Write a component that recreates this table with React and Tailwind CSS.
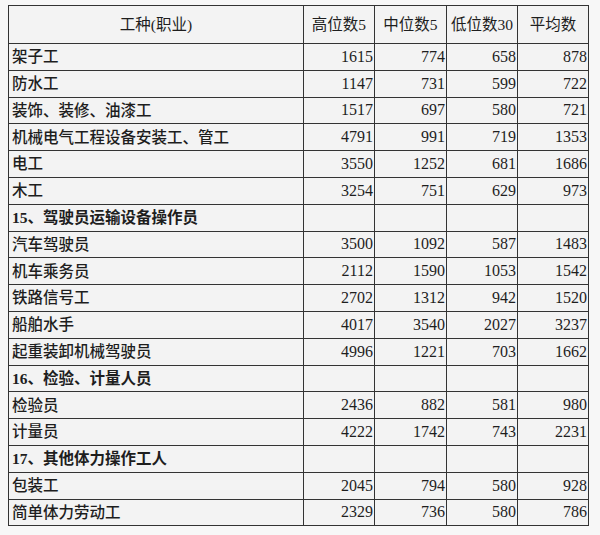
import React from 'react'

const rows = [
  ['架子工', 1615, 774, 658, 878],
  ['防水工', 1147, 731, 599, 722],
  ['装饰、装修、油漆工', 1517, 697, 580, 721],
  ['机械电气工程设备安装工、管工', 4791, 991, 719, 1353],
  ['电工', 3550, 1252, 681, 1686],
  ['木工', 3254, 751, 629, 973],
  ['15、驾驶员运输设备操作员'],
  ['汽车驾驶员', 3500, 1092, 587, 1483],
  ['机车乘务员', 2112, 1590, 1053, 1542],
  ['铁路信号工', 2702, 1312, 942, 1520],
  ['船舶水手', 4017, 3540, 2027, 3237],
  ['起重装卸机械驾驶员', 4996, 1221, 703, 1662],
  ['16、检验、计量人员'],
  ['检验员', 2436, 882, 581, 980],
  ['计量员', 4222, 1742, 743, 2231],
  ['17、其他体力操作工人'],
  ['包装工', 2045, 794, 580, 928],
  ['简单体力劳动工', 2329, 736, 580, 786],
]

const headers = ['高位数5', '中位数5', '低位数30', '平均数']

const App = () => {
  return (
    <div className="h-[535px] w-[600px] overflow-hidden bg-[#f7f7f7] pl-[8px] pt-[5px] font-['Liberation_Serif','Noto_Sans_CJK_SC',serif]">
      <table className="w-[580px] table-fixed border-collapse bg-[#f3f3f3] text-[15.5px] text-[#1e1e1e]">
        <colgroup>
          <col className="w-[295px]" />
          <col className="w-[71px]" />
          <col className="w-[72px]" />
          <col className="w-[71px]" />
          <col className="w-[71px]" />
        </colgroup>
        <thead>
          <tr className="h-[38px]">
            <th className="border-[1.5px] border-[#333] text-center font-normal">工种(职业)</th>
            {headers.map((h) => (
              <th key={h} className="whitespace-nowrap border-[1.5px] border-[#333] px-0 text-center font-normal">
                {h}
              </th>
            ))}
          </tr>
        </thead>
        <tbody>
          {rows.map((r) => {
            const section = r.length === 1
            return (
              <tr key={r[0]} className="h-[26.8px]">
                <td
                  className={`border-[1.5px] border-[#333] pl-[3px] leading-none ${section ? 'font-bold' : 'font-medium'}`}>
                  {r[0]}
                </td>
                {[1, 2, 3, 4].map((i) => (
                  <td key={i} className="border-[1.5px] border-[#333] pr-[1px] text-right text-[16px] leading-none">
                    {section ? '' : r[i]}
                  </td>
                ))}
              </tr>
            )
          })}
        </tbody>
      </table>
    </div>
  )
}

export default App
